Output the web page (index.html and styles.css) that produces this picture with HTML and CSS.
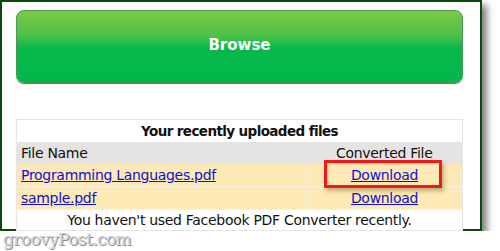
FILE: index.html
```html
<!DOCTYPE html>
<html lang="en">
<head>
    <meta charset="UTF-8">
    <meta name="viewport" content="width=device-width, initial-scale=1.0">
    <title>Facebook PDF Converter</title>
    <link rel="stylesheet" href="styles.css">
</head>
<body>
    <div class="frame">
        <button class="browse">Browse</button>

        <table class="recent">
            <tr class="title-row">
                <th colspan="2">Your recently uploaded files</th>
            </tr>
            <tr class="head-row">
                <td class="name-col">File Name</td>
                <td class="conv-col">Converted File</td>
            </tr>
            <tr class="file-row">
                <td class="name-col"><a href="#">Programming Languages.pdf</a></td>
                <td class="conv-col">
                    <span class="highlight"><a href="#">Download</a></span>
                </td>
            </tr>
            <tr class="file-row">
                <td class="name-col"><a href="#">sample.pdf</a></td>
                <td class="conv-col"><a href="#">Download</a></td>
            </tr>
            <tr class="note-row">
                <td colspan="2">You haven't used Facebook PDF Converter recently.</td>
            </tr>
        </table>
    </div>

    <div class="watermark">groovyPost.com</div>
</body>
</html>
```

FILE: styles.css
```css
body {
    margin: 0;
    background-color: white;
    font-family: "DejaVu Sans", Verdana, sans-serif;
    font-size: 14px;
    letter-spacing: -0.3px;
    color: #111;
}
.frame {
    box-sizing: border-box;
    width: 482px;
    height: 231px;
    padding: 8px 17px 0 14px;
    border: 2px solid #0b4a0b;
    background-color: white;
    box-shadow: 5px 5px 7px rgba(0,0,0,0.5);
}
.browse {
    display: block;
    width: 100%;
    height: 73px;
    margin-bottom: 36px;
    border: 1px solid #4a9a50;
    border-radius: 8px;
    background: linear-gradient(#7bc944 0%, #4dc14a 35%, #07b84b 52%, #00b84c 100%);
    box-shadow: 0 1px 0 #3d8a72;
    color: white;
    font-family: "DejaVu Sans", Verdana, sans-serif;
    font-size: 15px;
    font-weight: bold;
    padding: 0 0 3px 0;
    cursor: pointer;
}
.recent {
    width: 100%;
    border-collapse: collapse;
    border: 1px solid #e4e4e4;
}
.recent th,
.recent td {
    height: 22px;
    padding: 0 4px;
    vertical-align: middle;
}
.title-row th {
    font-size: 13.5px;
    letter-spacing: -0.6px;
    text-align: center;
    background-color: white;
}
.head-row td {
    background-color: #e6e4e2;
}
.name-col {
    text-align: left;
}
.conv-col {
    width: 147px;
    text-align: center;
}
.file-row td {
    background-color: #fde9b6;
    border-bottom: 1px solid #f4f0e4;
}
.file-row .conv-col {
    border-left: 1px solid #f3eedd;
}
.note-row td {
    text-align: center;
    background-color: white;
    height: 20px;
}
.recent a {
    color: #1010d0;
}
.highlight {
    display: inline-block;
    position: relative;
}
.highlight::after {
    content: "";
    position: absolute;
    left: -27px;
    right: -24px;
    top: -7px;
    bottom: -5px;
    border: 3px solid #ec1c1c;
    box-shadow: 2px 3px 4px rgba(90,70,0,0.35), inset 1px 1px 2px rgba(90,70,0,0.25);
}
.watermark {
    position: absolute;
    left: 3px;
    top: 229px;
    font-family: "DejaVu Serif", Georgia, serif;
    font-size: 17px;
    color: #d4d4d4;
    letter-spacing: -0.6px;
    text-shadow: 1px 1px 0 #8a8a8a, -1px 0 0 #f4f4f4;
}
```
